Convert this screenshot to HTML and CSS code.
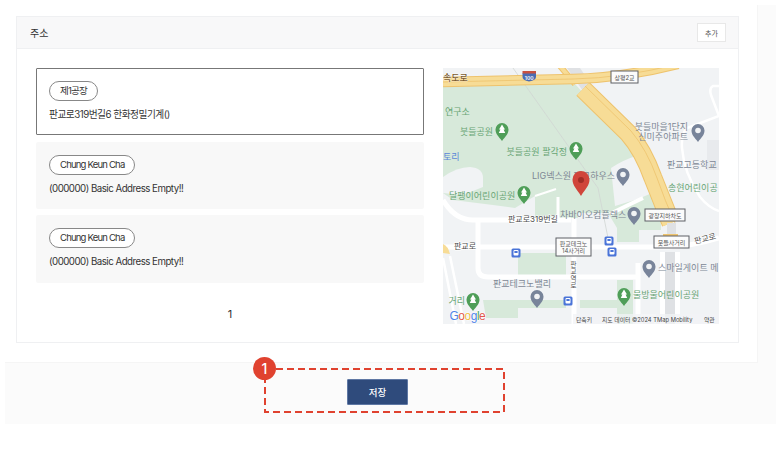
FILE: index.html
```html
<!DOCTYPE html>
<html lang="ko">
<head>
  <meta charset="UTF-8">
  <meta name="viewport" content="width=device-width, initial-scale=1.0">
  <title>주소</title>
  <link rel="stylesheet" href="styles.css">
</head>
<body>
  <div class="page">
    <div class="panel">
      <section class="card">
        <div class="card-head">
          <h3>주소</h3>
          <button class="add-btn" type="button">추가</button>
        </div>
        <div class="card-body">
          <div class="addr-col">
            <div class="addr addr-active">
              <span class="pill">제1공장</span>
              <p>판교로319번길6 한화정밀기계()</p>
            </div>
            <div class="addr">
              <span class="pill">Chung Keun Cha</span>
              <p>(000000) Basic Address Empty!!</p>
            </div>
            <div class="addr">
              <span class="pill">Chung Keun Cha</span>
              <p>(000000) Basic Address Empty!!</p>
            </div>
            <div class="paging">1</div>
          </div>

          <!-- map -->
          <svg class="map" viewBox="0 0 276 256" width="276" height="256">
            <defs>
              <path id="pin" d="M0 0C-3.4 -4.6 -6.500 -7 -6.500 -11.500A6.500 6.500 0 1 1 6.500 -11.500C6.500 -7 3.400 -4.600 0 0Z"/>
              <g id="graypin"><use href="#pin" fill="#78849a"/><circle cy="-11.500" r="2.800" fill="#f1f3f5"/></g>
              <g id="greenpin"><use href="#pin" fill="#4f9e58"/><path d="M0 -16.500L3 -11.500H1.600L3.200 -8H-3.200L-1.600 -11.500H-3Z" fill="#fff"/></g>
              <g id="bus"><rect x="-4.500" y="-4.500" width="9" height="9" rx="1.500" fill="#4a74d8"/><rect x="-2.500" y="-3" width="5" height="5.500" rx="1" fill="#fff"/><rect x="-1.600" y="-2" width="3.200" height="2" fill="#4a74d8"/></g>
            </defs>
            <rect width="276" height="256" fill="#f1f3f5"/>
            <rect x="264" y="72" width="12" height="30" fill="#e8eaed"/>

            <!-- green areas -->
            <path d="M0 16H132L177 65L204 98L218 137V162H196V174H174V160L165 145H135V150H92V128L72 140L50 137L10 132L0 125Z" fill="#d7e9da"/>
            <path d="M0 109Q14 99 27 99Q40 100 40 110V119L20 127L0 125Z" fill="#f1f3f5"/>
            <path d="M168 100Q180 92 193 88L209 125L195 131L172 138Z" fill="#f1f3f5"/>
            <path d="M75 185H123V207H75Z" fill="#d7e9da"/>
            <path d="M174 212H190V256H174Z" fill="#d7e9da"/>
            <path d="M40 232H123V240H75V250H43Z" fill="#d7e9da"/>
            <path d="M137 232H174V240H137Z" fill="#d7e9da"/>

            <!-- white roads -->
            <g fill="none" stroke="#fff" stroke-width="5">
              <path d="M0 132Q12 152 30 152H128"/>
              <path d="M0 179H225Q250 178 276 170"/>
              <path d="M35 152V200Q35 209 45 209H194"/>
              <path d="M131 150V256"/>
              <path d="M195 195V256"/>
              <path d="M167 146Q183 138 200 130" stroke-width="4"/>
              <path d="M115 150V129" stroke-width="3"/>
              <path d="M92 128L113 121" stroke-width="2"/>
              <path d="M276 48L244 60Q238 66 239 80Q241 105 257 129Q266 140 276 143" stroke-width="2.500"/>
              <path d="M276 18H270Q266 20 268 27L276 48" stroke-width="2.500"/>
              <path d="M0 190L13 256M7 188L21 256" stroke-width="2.500"/>
              <path d="M199 256V247H212V256" stroke-width="2"/>
            </g>
            <rect x="217" y="184" width="20" height="72" fill="#fff"/>
            <rect x="222" y="184" width="10" height="72" fill="#dfe1e4"/>
            <path d="M70 0L155 120L165 170" fill="none" stroke="#d0d5d3" stroke-width=".8"/>

            <!-- highways -->
            <path d="M124 0H137L154 25L144 29Z" fill="#dfe1e4"/>
            <g fill="none">
              <path d="M117 -2L132 16" stroke="#eec36d" stroke-width="6"/>
              <path d="M117 -2L132 16" stroke="#f7dc96" stroke-width="4"/>
              <path d="M140 21L185 65Q200 82 210 110Q220 135 228 155" stroke="#eec36d" stroke-width="19"/>
              <path d="M140 21L185 65Q200 82 210 110Q220 135 228 155" stroke="#f7dc96" stroke-width="17"/>
              <path d="M142 18L188 63Q204 82 214 110Q222 133 232 155" stroke="#eec36d" stroke-width=".8"/>
              <path d="M0 14L130 11Q180 10 235 -4" stroke="#eec36d" stroke-width="10.500"/>
              <path d="M0 14L130 11Q180 10 235 -4" stroke="#f7dc96" stroke-width="8.500"/>
              <path d="M0 14L130 11Q180 10 235 -4" stroke="#eec36d" stroke-width=".8"/>
            </g>
            <rect x="224" y="155" width="9" height="11" fill="#dfe1e4"/>
            <rect x="220" y="166" width="15" height="2" fill="#eec36d"/>
            <path d="M0 176Q5 178 7 186L0 185Z" fill="#f7dc96"/>

            <!-- labels -->
            <text class="t t-brown" x="0" y="13">속도로</text>
            <text class="t t-green" x="2" y="47">연구소</text>
            <text class="t t-green" x="50" y="67" text-anchor="end">붓들공원</text>
            <text class="t t-green" x="124" y="87" text-anchor="end">붓들공원 팔각정</text>
            <text class="t t-blue" x="0" y="92">토리</text>
            <text class="t t-gray" x="245" y="62" text-anchor="end">붓들마을1단지</text>
            <text class="t t-gray" x="245" y="72" text-anchor="end">신미주아파트</text>
            <text class="t t-gray" x="224" y="100">판교고등학교</text>
            <text class="t t-green" x="225" y="123">송현어린이공</text>
            <text class="t t-gray" x="172" y="111" text-anchor="end">LIG넥스원 판교하우스</text>
            <text class="t t-green" x="6" y="131">달팽이어린이공원</text>
            <text class="t t-road" x="65" y="154">판교로319번길</text>
            <text class="t t-gray" x="117" y="150">차바이오컴플렉스</text>
            <text class="t t-road" x="11" y="181">판교로</text>
            <text class="t t-road" x="252" y="176" transform="rotate(-14 252 176)">판교로</text>
            <text class="t t-gray" x="50" y="219">판교테크노밸리</text>
            <text class="t t-gray" x="215" y="203">스마일게이트 메</text>
            <text class="t t-green" x="190" y="230">물방울어린이공원</text>
            <text class="t t-green" x="22" y="236" text-anchor="end">거리</text>
            <g class="t-vert">
              <text x="130.500" y="199" text-anchor="middle">판</text>
              <text x="130.500" y="206" text-anchor="middle">교</text>
              <text x="130.500" y="213" text-anchor="middle">역</text>
              <text x="130.500" y="220" text-anchor="middle">로</text>
            </g>

            <!-- pins -->
            <use href="#graypin" x="255" y="74"/>
            <use href="#graypin" x="180" y="118"/>
            <use href="#graypin" x="191" y="157"/>
            <use href="#graypin" x="206" y="210"/>
            <use href="#graypin" x="94" y="240"/>
            <use href="#greenpin" x="59" y="73"/>
            <use href="#greenpin" x="133" y="92"/>
            <use href="#greenpin" x="81" y="136"/>
            <use href="#greenpin" x="181" y="238"/>
            <use href="#greenpin" x="30" y="243"/>
            <path d="M138 128C134 121 129.500 118 129.500 111.500A8.500 8.500 0 1 1 146.500 111.500C146.500 118 142 121 138 128Z" fill="#d0453a"/>
            <circle cx="138" cy="112" r="3" fill="#a12d25"/>

            <!-- bus stops -->
            <use href="#bus" x="73" y="185"/>
            <use href="#bus" x="166" y="173"/>
            <use href="#bus" x="169" y="184"/>
            <use href="#bus" x="125" y="233"/>

            <!-- road signs -->
            <path d="M79.500 5H93V9Q93 12 86 13.500Q79.500 12 79.500 9Z" fill="#4a6cb3"/>
            <rect x="79.500" y="3" width="13.500" height="2.500" fill="#c9513f"/>
            <text class="t-shield" x="86.200" y="11.500" text-anchor="middle">100</text>
            <rect class="sign" x="168" y="3" width="27" height="12"/>
            <text class="t-sign" x="181.500" y="11.500" text-anchor="middle">상평2교</text>
            <rect class="sign" x="202" y="141" width="40" height="12"/>
            <text class="t-sign" x="222" y="149.500" text-anchor="middle">광장지하차도</text>
            <rect class="sign" x="211" y="168" width="35" height="12"/>
            <text class="t-sign" x="228.500" y="176.500" text-anchor="middle">붓들사거리</text>
            <rect class="sign" x="113" y="170" width="35" height="18"/>
            <text class="t-sign" x="130.500" y="177.500" text-anchor="middle">판교테크노</text>
            <text class="t-sign" x="130.500" y="185" text-anchor="middle">14사거리</text>

            <!-- google logo and footer -->
            <text class="t-google" x="6.500" y="252"><tspan fill="#4d84e8">G</tspan><tspan fill="#e2574c">o</tspan><tspan fill="#f0bd3f">o</tspan><tspan fill="#4d84e8">g</tspan><tspan fill="#4ba75d">l</tspan><tspan fill="#e2574c">e</tspan></text>
            <rect x="130" y="246" width="146" height="10" fill="#f1f3f5" opacity=".75"/>
            <text class="t-foot" x="133" y="254">단축키</text>
            <text class="t-foot" x="159" y="254">지도 데이터 ©2024 TMap Mobility</text>
            <text class="t-foot" x="261" y="254">약관</text>
          </svg>
        </div>
      </section>
    </div>

    <div class="footer">
      <button class="save-btn" type="button">저장</button>
      <svg class="note-box" width="241" height="45">
        <rect x="1" y="1" width="239" height="43" fill="none" stroke="#e0422f" stroke-width="2" stroke-dasharray="7 4"/>
      </svg>
      <span class="note-num">1</span>
    </div>
  </div>
</body>
</html>
```

FILE: styles.css
```css
/* Basic styling for the address page */
body {
  font-family: Inter, "Noto Sans CJK KR", sans-serif;
  margin: 0;
  padding: 0;
  background-color: #ffffff;
  color: #333;
}

.page {
  margin: 5px 0 0 5px;
  height: 419px;
  background: #fbfbfb;
}

.panel {
  box-sizing: border-box;
  width: 753px;
  height: 358px;
  padding: 11px 18px 0 11px;
  background: #ffffff;
  border-bottom: 1px solid #f5f5f5;
  border-right: 1px solid #f5f5f5;
}

.card {
  height: 327px;
  box-sizing: border-box;
  border: 1px solid #eff0f2;
  background: #ffffff;
}

.card-head {
  display: flex;
  align-items: center;
  justify-content: space-between;
  height: 31px;
  padding: 0 12px 0 13px;
  background: #f8f8f9;
  border-bottom: 1px solid #eff0f2;
}

.card-head h3 {
  margin: 0;
  font-size: 10px;
  line-height: 14px;
  font-weight: 400;
  color: #333;
}

.add-btn {
  width: 29px;
  height: 19px;
  padding: 0;
  font-family: inherit;
  font-size: 7px;
  color: #555;
  background: #ffffff;
  border: 1px solid #e8e8e8;
}

.card-body {
  display: flex;
  gap: 19px;
  padding: 19px 19px 0;
}

.addr-col {
  width: 388px;
  display: flex;
  flex-direction: column;
  gap: 6px;
}

.addr {
  box-sizing: border-box;
  height: 67px;
  padding: 13px 13px 0;
  background: #f8f8f8;
  border-radius: 2px;
}

.addr:nth-child(3) {
  height: 68px;
}

.addr-active {
  margin-bottom: 1px;
  padding: 12px 12px 0;
  background: #ffffff;
  border: 1px solid #777;
  border-radius: 1px;
}

.addr p {
  margin: 7px 0 0;
  font-size: 9.700px;
  line-height: 14px;
  letter-spacing: -0.5px;
  color: #333;
}

.pill {
  display: block;
  width: fit-content;
  box-sizing: border-box;
  height: 20px;
  line-height: 18px;
  padding: 0 10px;
  font-size: 9.500px;
  letter-spacing: -0.8px;
  color: #333;
  background: #ffffff;
  border: 1px solid #888;
  border-radius: 10px;
}

.paging {
  margin-top: 18px;
  text-align: center;
  font-size: 11px;
  line-height: 14px;
  color: #333;
}

.map {
  display: block;
  flex-shrink: 0;
}

/* map labels */
.t { font-size: 9px; }
.t-brown { fill: #7a5a2c; font-weight: 500; stroke: #fff; stroke-width: .6px; paint-order: stroke; }
.t-green { fill: #67a574; }
.t-gray { fill: #7d8794; }
.t-blue { fill: #5a86d8; }
.t-road { fill: #4a4a4a; font-size: 8px; stroke: #fff; stroke-width: 1px; paint-order: stroke; }
.t-vert { fill: #555; font-size: 6.500px; }
.t-shield { fill: #fff; font-size: 5px; font-weight: 600; }
.sign { fill: #fbfbfb; stroke: #5e6166; stroke-width: 1; }
.t-sign { font-size: 6px; fill: #555; }
.t-google { font-family: "Liberation Sans", sans-serif; font-size: 12px; letter-spacing: -0.5px; stroke: #fff; stroke-width: .8px; paint-order: stroke; }
.t-foot { font-size: 5.800px; fill: #444; }

.footer {
  position: relative;
  display: flex;
  height: 61px;
  padding: 16px 0 0 342px;
  box-sizing: border-box;
}

.save-btn {
  width: 61px;
  height: 26px;
  padding: 0;
  font-family: inherit;
  font-size: 9.500px;
  font-weight: 500;
  color: #ffffff;
  background: #2f4b7c;
  border: 1px solid #5f78a4;
  border-radius: 1px;
}

.note-box {
  position: absolute;
  left: 259px;
  top: 5px;
}

.note-num {
  position: absolute;
  left: 248px;
  top: -6px;
  width: 23px;
  height: 23px;
  line-height: 23px;
  text-align: center;
  font-size: 14px;
  font-weight: 500;
  color: #ffffff;
  background: #e0422f;
  border-radius: 50%;
}
```
